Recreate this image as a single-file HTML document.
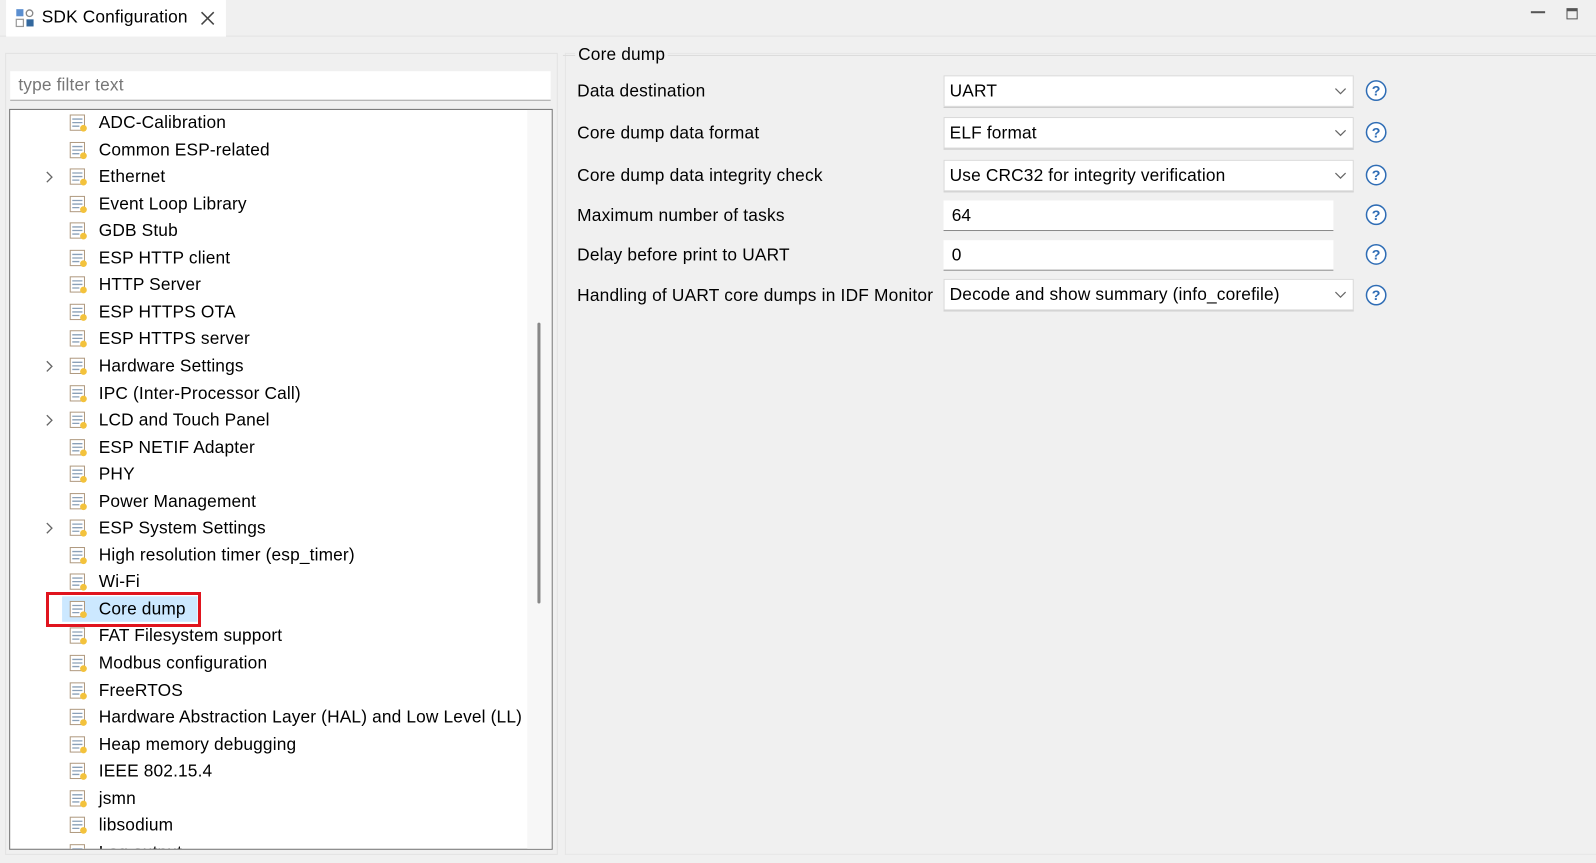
<!DOCTYPE html>
<html><head><meta charset="utf-8"><style>
html,body{margin:0;padding:0;width:1596px;height:863px;overflow:hidden;background:#f0f0f0;font-family:"Liberation Sans",sans-serif;color:#000}
#w{position:absolute;left:0;top:0;width:1568px;height:848px;transform:scale(1.01786,1.01769);transform-origin:0 0}
.a{position:absolute}
.t{font-size:17px;white-space:nowrap;letter-spacing:.15px}
.row{position:absolute;left:0;height:26px;width:510px}
.row .ic{position:absolute;left:58px;top:4px}
.row .tx{position:absolute;left:87px;top:3px;font-size:17px;letter-spacing:.15px;white-space:nowrap}
.row .ch{position:absolute;left:35px;top:7px}
.combo{position:absolute;left:927px;width:403px;height:31px;background:#fff;border:1px solid #d9d9d9;box-sizing:border-box;box-shadow:0 1px 0 #c8c8c8}
.combo span{position:absolute;left:5px;top:5px;font-size:17px;letter-spacing:.15px;white-space:nowrap}
.combo svg{position:absolute;right:6px;top:11px}
.field{position:absolute;left:927px;width:383px;height:30px;background:#fff;border-bottom:1.5px solid #8a8a8a;box-sizing:border-box}
.field span{position:absolute;left:8px;top:5px;font-size:17px}
.lbl{position:absolute;left:567px;font-size:17px;letter-spacing:.2px;white-space:nowrap}
</style></head><body><div id="w">
<div class="a" style="left:0;top:35px;width:1568px;height:1px;background:#e3e3e3"></div>
<div class="a" style="left:6px;top:0;width:216px;height:36px;background:#fff"></div>
<svg class="a" style="left:15px;top:8px" width="20" height="20" viewBox="0 0 20 20"><rect x="1" y="1" width="7" height="7" fill="#5b8fd0"/><circle cx="14" cy="5" r="3.2" fill="none" stroke="#888" stroke-width="1.3"/><rect x="1" y="11" width="7" height="7" fill="none" stroke="#999" stroke-width="1.2"/><rect x="11" y="11" width="7" height="7" fill="#33689e"/></svg>
<div class="a t" style="left:41px;top:7px">SDK Configuration</div>
<svg class="a" style="left:197px;top:11px" width="14" height="14"><path d="M1 1L13 13M13 1L1 13" stroke="#444" stroke-width="1.5"/></svg>
<div class="a" style="left:1504px;top:11px;width:14px;height:2px;background:#555"></div>
<div class="a" style="left:1539px;top:8px;width:11px;height:11px;border:1.5px solid #555;border-top-width:3px;box-sizing:border-box"></div>
<div class="a" style="left:5px;top:52px;width:543px;height:788px;border:1px solid #e2e2e2;box-sizing:border-box;background:#f0f0f0"></div>
<div class="a" style="left:10px;top:70px;width:531px;height:29px;background:#fff;border-bottom:1.5px solid #a0a0a0;box-sizing:border-box"></div>
<div class="a t" style="left:18px;top:74px;color:#777">type filter text</div>
<div class="a" style="left:9px;top:107px;width:534px;height:728px;border:1.5px solid #707070;box-sizing:border-box;background:#fff;overflow:hidden">
 <div class="a" style="left:508px;top:0;width:24px;height:728px;background:#f7f7f7"></div>
 <div class="a" style="left:518px;top:209px;width:3px;height:276px;background:#888;border-radius:2px"></div>
 <div id="tree" class="a" style="left:0;top:0"></div>
</div>
<div class="a" style="left:555px;top:52px;width:1013px;height:788px;border:1px solid #e6e6e6;border-right:none;box-sizing:border-box"></div>
<div class="a" style="left:553px;top:54px;width:1015px;height:1px;background:#dcdcdc"></div>
<div class="a t" style="left:565px;top:44px;background:#f0f0f0;padding:0 3px">Core dump</div>
<div class="lbl" style="top:80px">Data destination</div>
<div class="lbl" style="top:121px">Core dump data format</div>
<div class="lbl" style="top:163px">Core dump data integrity check</div>
<div class="lbl" style="top:202px">Maximum number of tasks</div>
<div class="lbl" style="top:241px">Delay before print to UART</div>
<div class="lbl" style="top:281px">Handling of UART core dumps in IDF Monitor</div>
<div class="combo" style="top:74px"><span>UART</span><svg width="12" height="8"><path d="M1 1L6 6L11 1" fill="none" stroke="#666" stroke-width="1.2"/></svg></div>
<div class="combo" style="top:115px"><span>ELF format</span><svg width="12" height="8"><path d="M1 1L6 6L11 1" fill="none" stroke="#666" stroke-width="1.2"/></svg></div>
<div class="combo" style="top:157px"><span>Use CRC32 for integrity verification</span><svg width="12" height="8"><path d="M1 1L6 6L11 1" fill="none" stroke="#666" stroke-width="1.2"/></svg></div>
<div class="field" style="top:197px"><span>64</span></div>
<div class="field" style="top:236px"><span>0</span></div>
<div class="combo" style="top:274px"><span>Decode and show summary (info_corefile)</span><svg width="12" height="8"><path d="M1 1L6 6L11 1" fill="none" stroke="#666" stroke-width="1.2"/></svg></div>
<div id="helps"></div>
</div>
<script>
var names=["ADC-Calibration","Common ESP-related","Ethernet","Event Loop Library","GDB Stub","ESP HTTP client","HTTP Server","ESP HTTPS OTA","ESP HTTPS server","Hardware Settings","IPC (Inter-Processor Call)","LCD and Touch Panel","ESP NETIF Adapter","PHY","Power Management","ESP System Settings","High resolution timer (esp_timer)","Wi-Fi","Core dump","FAT Filesystem support","Modbus configuration","FreeRTOS","Hardware Abstraction Layer (HAL) and Low Level (LL)","Heap memory debugging","IEEE 802.15.4","jsmn","libsodium","Log output"];
var exp={"Ethernet":1,"Hardware Settings":1,"LCD and Touch Panel":1,"ESP System Settings":1};
var ic='<svg class="ic" width="18" height="18" viewBox="0 0 18 18"><rect x="1" y="1" width="14" height="15" fill="#fff" stroke="#b09a80"/><path d="M3 5h10M3 8.5h10M3 12h7" stroke="#8aa0b8" stroke-width="1.3"/><circle cx="14" cy="14" r="3.3" fill="#f3c23c"/></svg>';
var h='';
for(var i=0;i<names.length;i++){var y=i*26.55;var n=names[i];
 h+='<div class="row" style="top:'+(y)+'px">';
 if(n=="Core dump")h+='<div class="a" style="left:51px;top:0;width:133px;height:25px;background:#cce8ff"></div>';
 if(exp[n])h+='<svg class="ch" width="8" height="12"><path d="M1 1L6 6L1 11" fill="none" stroke="#666" stroke-width="1.3"/></svg>';
 h+=ic+'<div class="tx">'+n+'</div></div>';}
document.getElementById('tree').innerHTML=h;
var hy=[78,119,161,200,239,279],hh='';
for(var j=0;j<6;j++)hh+='<svg class="a" style="left:1341px;top:'+hy[j]+'px" width="22" height="22" viewBox="0 0 22 22"><circle cx="11" cy="11" r="9.5" fill="#fff" stroke="#2f6db5" stroke-width="1.5"/><text x="11" y="16" text-anchor="middle" font-family="Liberation Sans" font-size="14" font-weight="bold" fill="#2f6db5">?</text></svg>';
document.getElementById('helps').innerHTML=hh;
</script>
<div style="position:absolute;left:45.8px;top:592px;width:155px;height:35px;border:3px solid #e0141e;box-sizing:border-box"></div>
</body></html>
